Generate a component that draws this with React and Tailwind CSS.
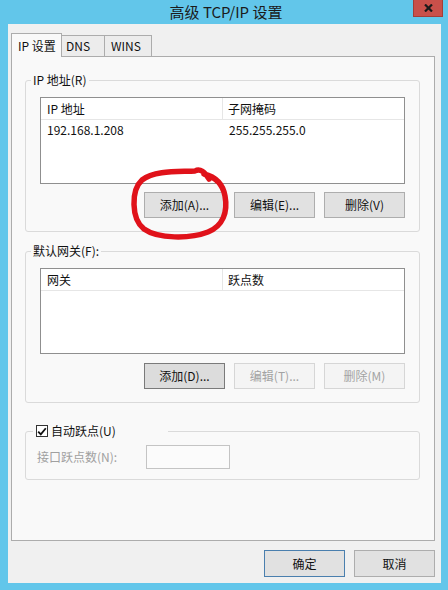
import React from "react";

const font = "font-['Microsoft_YaHei','Noto_Sans_CJK_SC','Noto_Sans',sans-serif]";

function Btn({ children, disabled, strong, def, className = "" }) {
  let tone = "bg-[#e1e1e1] border-[#adadad] text-[#111]";
  if (disabled) tone = "bg-[#f4f4f4] border-[#d6d6d6] text-[#a3a3a3]";
  if (strong) tone = "bg-[#dcdcdc] border-[#7a7a7a] text-[#111]";
  if (def) tone = "bg-[#e1e1e1] border-[#4a7fae] text-[#111]";
  return (
    <div className={`w-[81px] h-[26px] border flex items-center justify-center text-[12px] leading-none ${tone} ${className}`}>
      {children}
    </div>
  );
}

function ListBox({ cols, rows = [], h }) {
  return (
    <div className={`border border-[#8f8f8f] bg-white ${h}`}>
      <div className="flex h-[22px] border-b border-[#e6e6e6]">
        <div className="w-[182px] border-r border-[#e6e6e6] pl-[6px] flex items-center">{cols[0]}</div>
        <div className="flex-1 pl-[5px] flex items-center">{cols[1]}</div>
      </div>
      {rows.map((r, i) => (
        <div key={i} className="flex h-[20px] items-center">
          <div className="w-[182px] pl-[6px]">{r[0]}</div>
          <div className="flex-1 pl-[6px]">{r[1]}</div>
        </div>
      ))}
    </div>
  );
}

export default function App() {
  return (
    <div className={`relative w-[448px] h-[590px] bg-[#62c6ea] flex flex-col text-[12px] leading-[16px] text-[#111] ${font}`}>
      {/* title bar */}
      <div className="relative h-[24px] flex items-center justify-center">
        <span className="text-[15px] text-[#1b1b1b] pl-[4px]">高级 TCP/IP 设置</span>
        <div className="absolute right-[5px] top-0 w-[30px] h-[17px] bg-[#c9504a] border border-[#a33d38] border-t-0 flex items-center justify-center">
          <svg width="9" height="8" viewBox="0 0 9 8">
            <path d="M1 0.5 L8 7.5 M8 0.5 L1 7.5" stroke="#1a1a1a" strokeWidth="2.2" />
          </svg>
        </div>
      </div>

      {/* dialog body */}
      <div className="ml-[8px] w-[433px] h-[559px] bg-[#f0f0f0] flex flex-col">
        {/* tabs */}
        <div className="ml-[3px] mt-[9px] h-[23px] flex items-end">
          <div className="relative z-10 -mb-px h-[24px] w-[51px] border border-b-0 border-[#acacac] bg-[#f9f9f9] flex items-center pl-[6px]">
            IP 设置
          </div>
          <div className="h-[21px] w-[43px] border border-l-0 border-b-0 border-[#acacac] bg-[#ececec] flex items-center pl-[4px]">
            DNS
          </div>
          <div className="h-[21px] w-[47px] border border-l-0 border-b-0 border-[#acacac] bg-[#ececec] flex items-center pl-[6px]">
            WINS
          </div>
        </div>

        {/* tab page */}
        <div className="ml-[3px] w-[424px] h-[485px] border border-[#acacac] bg-[#f9f9f9] flex flex-col">
          <fieldset className="ml-[13px] mt-[15px] w-[395px] border border-[#dadada] rounded-[3px]">
            <legend className="ml-[5px] px-[2px] leading-[16px]">IP 地址(R)</legend>
            <div className="px-[14px] pb-[13px]">
              <div className="mt-[9px]">
                <ListBox h="h-[87px]" cols={["IP 地址", "子网掩码"]} rows={[["192.168.1.208", "255.255.255.0"]]} />
              </div>
              <div className="mt-[8px] flex justify-end gap-[9px]">
                <Btn>添加(A)...</Btn>
                <Btn>编辑(E)...</Btn>
                <Btn>删除(V)</Btn>
              </div>
            </div>
          </fieldset>

          <fieldset className="ml-[13px] mt-[11px] w-[395px] border border-[#dadada] rounded-[3px]">
            <legend className="ml-[5px] px-[2px] leading-[16px]">默认网关(F):</legend>
            <div className="px-[14px] pb-[13px]">
              <div className="mt-[9px]">
                <ListBox h="h-[86px]" cols={["网关", "跃点数"]} />
              </div>
              <div className="mt-[9px] flex justify-end gap-[9px]">
                <Btn strong>添加(D)...</Btn>
                <Btn disabled>编辑(T)...</Btn>
                <Btn disabled>删除(M)</Btn>
              </div>
            </div>
          </fieldset>

          <fieldset className="ml-[13px] mt-[20px] w-[395px] border border-[#dadada] rounded-[3px]">
            <legend className="ml-[7px] pl-[3px] w-[135px] flex items-center gap-[3px] leading-[16px]">
              <span className="w-[12px] h-[12px] border border-[#333] bg-white flex items-center justify-center">
                <svg width="10" height="9" viewBox="0 0 10 9">
                  <path d="M1.2 4.6 L3.8 7.4 L8.8 1.2" fill="none" stroke="#111" strokeWidth="1.8" />
                </svg>
              </span>
              <span>自动跃点(U)</span>
            </legend>
            <div className="pl-[11px] pb-[10px] mt-[6px] flex items-center">
              <span className="w-[109px] text-[#a0a0a0]">接口跃点数(N):</span>
              <div className="w-[84px] h-[24px] border border-[#c4c4c4] bg-[#fbfbfb]" />
            </div>
          </fieldset>
        </div>

        {/* dialog buttons */}
        <div className="mt-[9px] pr-[6px] flex justify-end gap-[9px]">
          <Btn def className="h-[27px]">确定</Btn>
          <Btn className="h-[27px]">取消</Btn>
        </div>
      </div>

      {/* red pen mark drawn around the add button */}
      <svg className="absolute left-0 top-0 pointer-events-none" width="448" height="590" viewBox="0 0 448 590">
        <path
          d="M209 179 C205 172 200 168 195 171 C180 172 155 170 142 180 C131 190 131 219 144 229 C158 239 190 239 208 232 C223 226 228 212 225 196 C223 185 216 177 204 174"
          fill="none"
          stroke="#e0121a"
          strokeWidth="5.5"
          strokeLinecap="round"
          strokeLinejoin="round"
        />
      </svg>
    </div>
  );
}
